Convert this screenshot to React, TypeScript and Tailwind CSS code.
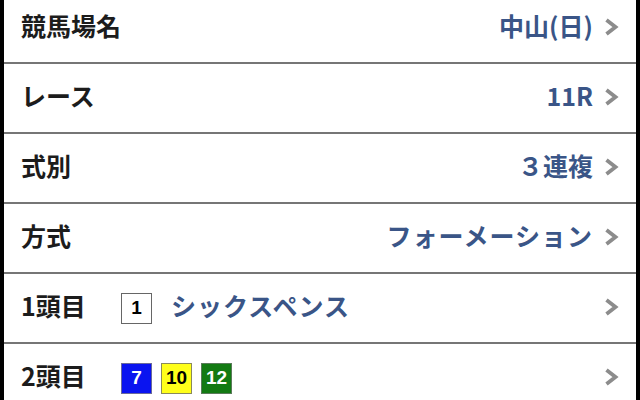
import React from 'react';

type Row = {
  label: string;
  value?: string;
  wide?: boolean;
  horses?: { no: number; bg: string; fg: string; border: string }[];
  horseName?: string;
};

const rows: Row[] = [
  { label: '競馬場名', value: '中山(日)' },
  { label: 'レース', value: '11R' },
  { label: '式別', value: '３連複' },
  { label: '方式', value: 'フォーメーション', wide: true },
  {
    label: '1頭目',
    horses: [{ no: 1, bg: 'bg-white', fg: 'text-black', border: 'border-[#666]' }],
    horseName: 'シックスペンス',
  },
  {
    label: '2頭目',
    horses: [
      { no: 7, bg: 'bg-[#0a14f0]', fg: 'text-white', border: 'border-[#6a6a9a]' },
      { no: 10, bg: 'bg-[#ffff1a]', fg: 'text-black', border: 'border-[#8a8a5a]' },
      { no: 12, bg: 'bg-[#137a13]', fg: 'text-white', border: 'border-[#5a7a5a]' },
    ],
  },
];

function Chevron() {
  return (
    <svg width="15" height="18" viewBox="0 0 15 18" className="shrink-0">
      <polyline points="2.5,2 11.5,9 2.5,16" fill="none" stroke="#8c8c8c" strokeWidth="3.8" />
    </svg>
  );
}

export default function App() {
  return (
    <div
      className="h-[400px] w-[640px] overflow-hidden border-x-4 border-black bg-white"
      style={{ fontFamily: '"Noto Sans CJK JP", "Liberation Sans", sans-serif' }}
    >
      <div className="-mt-[6px]">
        {rows.map((row) => (
          <div
            key={row.label}
            className="flex h-[70px] items-center border-b-2 border-[#767676] pl-[17px] pr-[17px]"
          >
            <span className="-mt-[5px] w-[100px] shrink-0 text-[25px] font-bold leading-none text-[#1c1c1c]">
              {row.label}
            </span>
            {row.horses ? (
              <div className="flex flex-1 items-center gap-[9px]">
                {row.horses.map((h) => (
                  <span
                    key={h.no}
                    className={`flex h-[31px] w-[31px] items-center justify-center border ${h.bg} ${h.fg} ${h.border} text-[19px] font-bold`}
                    style={{ fontFamily: '"Liberation Sans", Arial, sans-serif' }}
                  >
                    {h.no}
                  </span>
                ))}
                {row.horseName && (
                  <span className="-mt-[5px] ml-[10px] text-[25px] font-bold leading-none tracking-[1px] text-[#3a5587]">
                    {row.horseName}
                  </span>
                )}
              </div>
            ) : (
              <span
                className={`-mt-[5px] flex-1 text-right text-[25px] font-bold leading-none text-[#3a5587] ${
                  row.wide ? 'tracking-[1px]' : ''
                }`}
              >
                {row.value}
              </span>
            )}
            <span className="-mt-[2px] ml-[11px] flex items-center">
              <Chevron />
            </span>
          </div>
        ))}
      </div>
    </div>
  );
}
